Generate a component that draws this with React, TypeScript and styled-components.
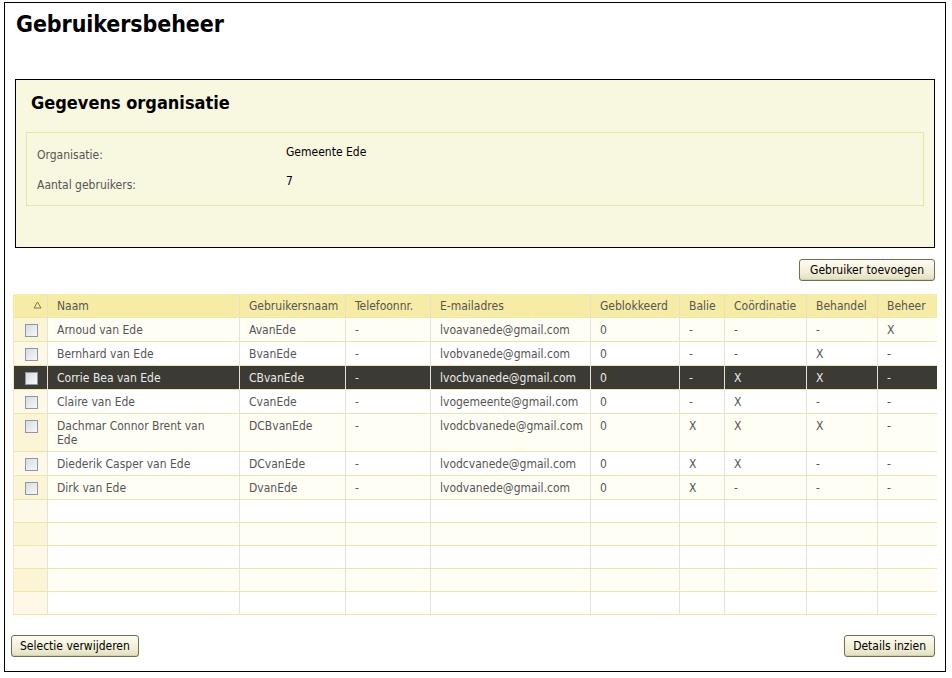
import React from "react";
import styled, { createGlobalStyle } from "styled-components";

const Global = createGlobalStyle`
  html, body { margin: 0; padding: 0; background: #ffffff; }
  body { font-family: "DejaVu Sans Condensed", "DejaVu Sans", Tahoma, sans-serif; font-size: 12px; color: #000; }
`;

const Page = styled.div`
  box-sizing: border-box;
  margin: 2px 0 0 4px;
  width: 942px;
  height: 670px;
  border: 1px solid #000;
  display: flex;
  flex-direction: column;
`;

const Title = styled.h1`
  margin: 7px 0 0 11px;
  font-size: 23px;
  font-weight: bold;
  letter-spacing: -0.1px;
  line-height: 28px;
  height: 69px;
`;

const Panel = styled.section`
  box-sizing: border-box;
  margin: 0 0 0 10px;
  width: 920px;
  height: 169px;
  background: #f8f7df;
  border: 1px solid #000;
  padding: 11px 10px 0 10px;
`;

const PanelTitle = styled.h2`
  margin: 0 0 0 5px;
  font-size: 18px;
  font-weight: bold;
  line-height: 24px;
  height: 41px;
`;

const InfoBox = styled.div`
  box-sizing: border-box;
  width: 898px;
  height: 74px;
  border: 1px solid #ece4a4;
  padding: 9px 10px 0 10px;
  display: grid;
  grid-template-columns: 249px 1fr;
  grid-auto-rows: 30px;
`;

const Label = styled.div`
  color: #555;
  font-size: 12px;
  line-height: 26px;
`;

const Value = styled.div<{ $raise?: boolean }>`
  color: #000;
  font-size: 12px;
  line-height: ${(p) => (p.$raise ? "18px" : "20px")};
`;

const ActionBar = styled.div<{ $between?: boolean }>`
  display: flex;
  justify-content: ${(p) => (p.$between ? "space-between" : "flex-end")};
  align-items: center;
  padding: 0 10px 0 ${(p) => (p.$between ? "6px" : "0")};
`;

const TopBar = styled(ActionBar)`
  margin-top: 11px;
  height: 22px;
`;

const BottomBar = styled(ActionBar)`
  margin-top: 20px;
`;

const Button = styled.button<{ $wide?: boolean }>`
  box-sizing: border-box;
  height: 22px;
  padding: 0 ${(p) => (p.$wide ? "10px" : "8px")};
  font-family: inherit;
  font-size: 12px;
  color: #000;
  background: linear-gradient(#fdfcf1, #f1efd6 60%, #e2dfbf);
  border: 1px solid #6f6e52;
  border-radius: 3px;
  box-shadow: inset 0 -1px 0 #d2cfac;
  cursor: pointer;
`;

const TableWrap = styled.div`
  margin: 13px 0 0 8px;
`;

const Table = styled.table`
  border-collapse: collapse;
  table-layout: fixed;
  width: 923px;
  color: #555;
  font-size: 12px;
`;

const HeadCell = styled.th<{ $first?: boolean }>`
  background: #f7eca6;
  font-weight: normal;
  text-align: ${(p) => (p.$first ? "right" : "left")};
  padding: 0 ${(p) => (p.$first ? "5px" : "0")} 0 ${(p) => (p.$first ? "0" : "9px")};
  height: 23px;
  border-left: 1px solid ${(p) => (p.$first ? "#f7eca6" : "#e9e3c4")};
  color: #555;
  overflow: hidden;
  white-space: nowrap;
`;

const SortIcon = styled.svg`
  vertical-align: middle;
  margin-top: -2px;
`;

const Row = styled.tr<{ $selected?: boolean; $alt?: boolean }>`
  background: ${(p) => (p.$selected ? "#3b3a35" : p.$alt ? "#fffef5" : "#ffffff")};
  color: ${(p) => (p.$selected ? "#ecece6" : "#555")};
  border-top: 1px solid #efe5a6;
`;

const Cell = styled.td<{ $wrapPad?: boolean }>`
  vertical-align: top;
  padding: 5px ${(p) => (p.$wrapPad ? "22px" : "8px")} 4px 9px;
  line-height: 14px;
  border-left: 1px solid #e5e3d8;
  overflow: hidden;
`;

const CheckCell = styled.td<{ $selected?: boolean; $alt?: boolean }>`
  vertical-align: top;
  padding: 6px 0 0 11px;
  background: ${(p) => (p.$selected ? "#3b3a35" : p.$alt ? "#fbf5d6" : "#fdf9e6")};
  border-left: 1px solid #f3ebc0;
`;

const EmptyCell = styled.td`
  height: 20px;
  border-left: 1px solid #e5e3d8;
`;

const Check = styled.span`
  display: block;
  box-sizing: border-box;
  width: 13px;
  height: 13px;
  border: 1px solid #8a98a8;
  background: linear-gradient(135deg, #d8dce2, #f7f7f5);
`;

const BottomBorder = styled.tr`
  border-top: 1px solid #efe5a6;
`;

type User = {
  naam: string;
  user: string;
  tel: string;
  mail: string;
  blok: string;
  balie: string;
  coord: string;
  behandel: string;
  beheer: string;
  selected?: boolean;
};

const users: User[] = [
  { naam: "Arnoud van Ede", user: "AvanEde", tel: "-", mail: "lvoavanede@gmail.com", blok: "0", balie: "-", coord: "-", behandel: "-", beheer: "X" },
  { naam: "Bernhard van Ede", user: "BvanEde", tel: "-", mail: "lvobvanede@gmail.com", blok: "0", balie: "-", coord: "-", behandel: "X", beheer: "-" },
  { naam: "Corrie Bea van Ede", user: "CBvanEde", tel: "-", mail: "lvocbvanede@gmail.com", blok: "0", balie: "-", coord: "X", behandel: "X", beheer: "-", selected: true },
  { naam: "Claire van Ede", user: "CvanEde", tel: "-", mail: "lvogemeente@gmail.com", blok: "0", balie: "-", coord: "X", behandel: "-", beheer: "-" },
  { naam: "Dachmar Connor Brent van Ede", user: "DCBvanEde", tel: "-", mail: "lvodcbvanede@gmail.com", blok: "0", balie: "X", coord: "X", behandel: "X", beheer: "-" },
  { naam: "Diederik Casper van Ede", user: "DCvanEde", tel: "-", mail: "lvodcvanede@gmail.com", blok: "0", balie: "X", coord: "X", behandel: "-", beheer: "-" },
  { naam: "Dirk van Ede", user: "DvanEde", tel: "-", mail: "lvodvanede@gmail.com", blok: "0", balie: "X", coord: "-", behandel: "-", beheer: "-" },
];

const widths = [34, 192, 106, 85, 160, 89, 45, 82, 71, 59];
const headers = ["Naam", "Gebruikersnaam", "Telefoonnr.", "E-mailadres", "Geblokkeerd", "Balie", "Coördinatie", "Behandel", "Beheer"];

export default function App() {
  return (
    <>
      <Global />
      <Page>
        <Title>Gebruikersbeheer</Title>
        <Panel>
          <PanelTitle>Gegevens organisatie</PanelTitle>
          <InfoBox>
            <Label>Organisatie:</Label>
            <Value>Gemeente Ede</Value>
            <Label>Aantal gebruikers:</Label>
            <Value $raise>7</Value>
          </InfoBox>
        </Panel>
        <TopBar>
          <Button $wide>Gebruiker toevoegen</Button>
        </TopBar>
        <TableWrap>
          <Table>
            <colgroup>
              {widths.map((w, i) => (
                <col key={i} style={{ width: w }} />
              ))}
            </colgroup>
            <thead>
              <tr>
                <HeadCell $first>
                  <SortIcon width="9" height="8" viewBox="0 0 9 8">
                    <path d="M4.5 1 L8 7 L1 7 Z" fill="none" stroke="#7a7560" strokeWidth="1" />
                  </SortIcon>
                </HeadCell>
                {headers.map((h) => (
                  <HeadCell key={h}>{h}</HeadCell>
                ))}
              </tr>
            </thead>
            <tbody>
              {users.map((u, i) => (
                <Row key={u.user} $selected={u.selected} $alt={i % 2 === 0}>
                  <CheckCell $selected={u.selected} $alt={i % 2 === 0}>
                    <Check />
                  </CheckCell>
                  <Cell $wrapPad>{u.naam}</Cell>
                  <Cell>{u.user}</Cell>
                  <Cell>{u.tel}</Cell>
                  <Cell>{u.mail}</Cell>
                  <Cell>{u.blok}</Cell>
                  <Cell>{u.balie}</Cell>
                  <Cell>{u.coord}</Cell>
                  <Cell>{u.behandel}</Cell>
                  <Cell>{u.beheer}</Cell>
                </Row>
              ))}
              {[0, 1, 2, 3, 4].map((r) => (
                <Row key={"e" + r} $alt={r % 2 === 1}>
                  <CheckCell $alt={r % 2 === 1} />
                  {headers.map((h) => (
                    <EmptyCell key={h} />
                  ))}
                </Row>
              ))}
              <BottomBorder />
            </tbody>
          </Table>
        </TableWrap>
        <BottomBar $between>
          <Button>Selectie verwijderen</Button>
          <Button>Details inzien</Button>
        </BottomBar>
      </Page>
    </>
  );
}
